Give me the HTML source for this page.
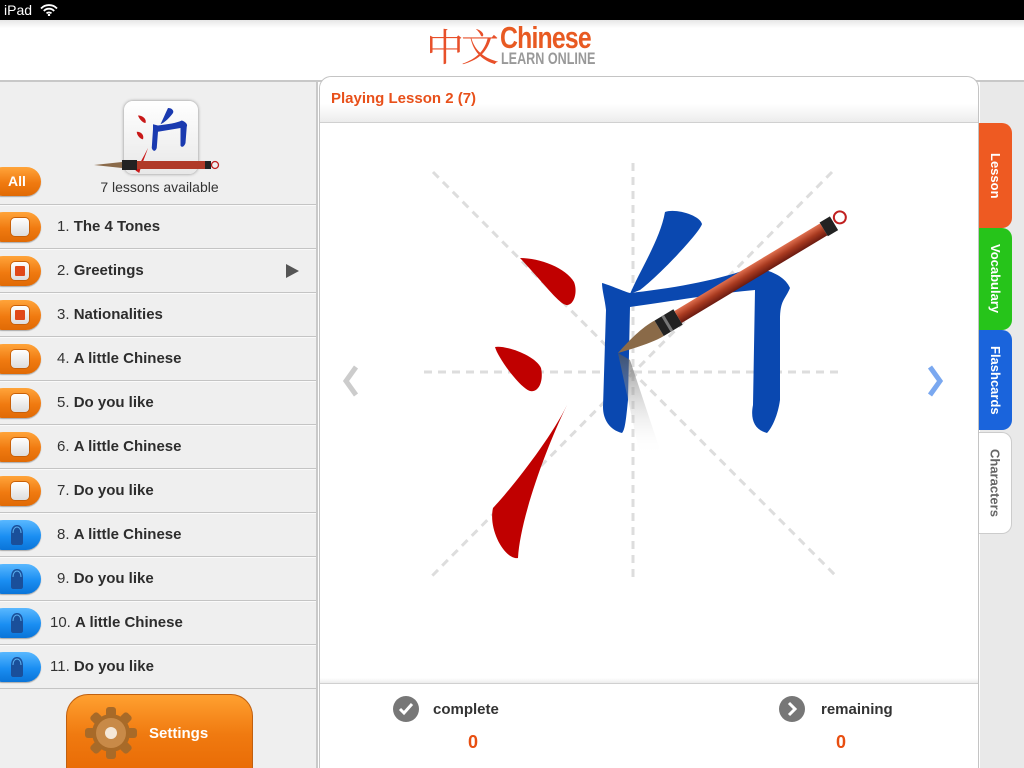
<!DOCTYPE html>
<html><head><meta charset="utf-8"><style>
*{margin:0;padding:0;box-sizing:border-box}
html,body{width:1024px;height:768px;overflow:hidden}
body{position:relative;background:#fff;font-family:"Liberation Sans","DejaVu Sans",sans-serif}
.abs{position:absolute}
#status{left:0;top:0;width:1024px;height:20px;background:#000;color:#fff;font-size:14px;line-height:20px;padding-left:4px}
#header{left:0;top:20px;width:1024px;height:62px;background:linear-gradient(#e6e6e6 0,#fff 8px,#fff 100%);border-bottom:2px solid #c8c8c8}
#left{left:0;top:82px;width:318px;height:686px;background:#efefef;border-right:2px solid #c9c9c9}
.row{position:absolute;left:0;width:316px;height:44px;border-top:1px solid #c4c4c4;box-shadow:inset 0 1px 0 #fafafa}
.pill{position:absolute;left:-12px;top:7px;width:53px;height:30px;border-radius:15px;background:linear-gradient(#ffa43a,#f07a10 55%,#e06a05);box-shadow:0 1px 1px rgba(0,0,0,.3)}
.pill.blue{background:linear-gradient(#5ab8ff,#1a8ef2 55%,#0a74d8)}
.cb{position:absolute;left:23px;top:6px;width:18px;height:18px;border-radius:4px;background:linear-gradient(#fff,#ddd);box-shadow:0 0 0 1px #c86008}
.cb.on::after{content:"";position:absolute;left:4px;top:4px;width:10px;height:10px;background:#e04818;border-radius:1px}
.lock{position:absolute;left:22px;top:5px;width:14px;height:20px}
.lbl{position:absolute;top:13px;font-size:15px;color:#333;white-space:nowrap}
.lbl b{color:#2d2d2d}
#main{left:319px;top:76px;width:660px;height:692px;background:#fff;border:1px solid #c4c4c4;border-bottom:none;border-radius:12px 12px 0 0}
#mh{left:320px;top:77px;width:658px;height:46px;background:linear-gradient(#fff 60%,#ececec);border-bottom:1px solid #d0d0d0;border-radius:12px 12px 0 0;color:#e8501a;font-weight:bold;font-size:15px;padding:13px 0 0 11px}
#mf{left:320px;top:678px;width:658px;height:6px;background:linear-gradient(#fff,#ececec);border-bottom:1px solid #d0d0d0}
#tabsbg{left:980px;top:82px;width:44px;height:686px;background:#e9e9e9}
.tab{position:absolute;left:979px;width:33px;border-radius:0 10px 10px 0;color:#fff;font-weight:bold;font-size:13px;writing-mode:vertical-rl;text-align:center;display:flex;align-items:center;justify-content:center;line-height:33px}
</style></head><body>
<div id="status" class="abs">iPad <svg width="18" height="12" viewBox="0 0 18 12" style="vertical-align:-1px;margin-left:4px"><path d="M1 4.5A11 11 0 0 1 17 4.5M3.8 7A7 7 0 0 1 14.2 7M6.5 9.4A3.5 3.5 0 0 1 11.5 9.4" stroke="#fff" stroke-width="1.8" fill="none"/><circle cx="9" cy="11" r="1.2" fill="#fff"/></svg></div>
<div id="header" class="abs">
 <div class="abs" style="left:426px;top:2px;font-family:'Noto Serif CJK SC',serif;font-size:38px;color:#e8502a;line-height:46px;letter-spacing:-3px">中文</div>
 <div class="abs" style="left:500px;top:3px;font-size:31px;font-weight:bold;color:#e85a22;line-height:30px;transform:scaleX(.8);transform-origin:left;letter-spacing:-1px">Chinese</div>
 <div class="abs" style="left:501px;top:31px;font-size:17px;font-weight:bold;color:#999;line-height:16px;transform:scaleX(.74);transform-origin:left">LEARN ONLINE</div>
</div>
<div id="left" class="abs">
 <div class="abs" style="left:124px;top:19px;width:74px;height:73px;border-radius:9px;background:linear-gradient(#fff,#e8e8e8);box-shadow:0 0 3px #888"></div>
 <svg class="abs" style="left:124px;top:19px" width="74" height="73" viewBox="0 0 74 73">
  <g transform="translate(-6,-3) scale(1.25)">
  <g fill="#c81818"><path d="M16 14C20 14 23 17 22 20C20 20 17 17 16 14Z"/><path d="M15 27C19 27 21 30 20 33C18 33 15 30 15 27Z"/><path d="M24 40C20 48 16 55 14 58L17 60C19 53 22 46 24 40Z"/></g>
  <g fill="#1a3ab0"><path d="M40 8C43 8 45 10 44 12C42 15 37 20 34 21C36 17 38 12 40 8Z"/><path d="M28 21L32 22C40 21 47 20 51 18C54 19 56 21 55 23L54 36C53 39 51 40 50 38L50 24C44 25 38 26 32 27L31 40C30 43 28 43 27 40L28 25Z"/></g>
  </g>
 </svg>
 <svg class="abs" style="left:94px;top:76px" width="128" height="14"><path d="M0 7 L28 4 L28 10Z" fill="#8a6a4a"/><rect x="28" y="2" width="15" height="10" fill="#222"/><rect x="43" y="3" width="68" height="8" fill="#b03a28"/><rect x="111" y="3" width="6" height="8" fill="#222"/><circle cx="121" cy="7" r="3.5" fill="none" stroke="#c02020" stroke-width="1.3"/></svg>
 <div class="abs" style="left:0;top:97px;width:318px;text-align:center;font-size:14px;color:#333;padding-left:1px">7 lessons available</div>
 <div class="pill" style="top:85px;height:29px"><span style="position:absolute;left:20px;top:6px;color:#fff;font-weight:bold;font-size:14px">All</span></div>
</div>
<div class="row" style="top:204px"><div class="pill"><div class="cb"></div></div><div class="lbl" style="left:57px">1. <b>The 4 Tones</b></div></div>
<div class="row" style="top:248px"><div class="pill"><div class="cb on"></div></div><div class="lbl" style="left:57px">2. <b>Greetings</b></div><svg class="abs" style="left:286px;top:15px" width="14" height="14"><path d="M0 0L13 7L0 14Z" fill="#555"/></svg></div>
<div class="row" style="top:292px"><div class="pill"><div class="cb on"></div></div><div class="lbl" style="left:57px">3. <b>Nationalities</b></div></div>
<div class="row" style="top:336px"><div class="pill"><div class="cb"></div></div><div class="lbl" style="left:57px">4. <b>A little Chinese</b></div></div>
<div class="row" style="top:380px"><div class="pill"><div class="cb"></div></div><div class="lbl" style="left:57px">5. <b>Do you like</b></div></div>
<div class="row" style="top:424px"><div class="pill"><div class="cb"></div></div><div class="lbl" style="left:57px">6. <b>A little Chinese</b></div></div>
<div class="row" style="top:468px"><div class="pill"><div class="cb"></div></div><div class="lbl" style="left:57px">7. <b>Do you like</b></div></div>
<div class="row" style="top:512px"><div class="pill blue"><svg class="lock" viewBox="0 0 14 20"><path d="M1 9C1 2 4 0 7 0S13 2 13 9V18C13 19 12 20 11 20H3C2 20 1 19 1 18Z" fill="#1a4f9a"/><path d="M3 8C3 4 5 2 7 2S11 4 11 8" stroke="#5ab0f0" stroke-width="1" fill="none"/></svg></div><div class="lbl" style="left:57px">8. <b>A little Chinese</b></div></div>
<div class="row" style="top:556px"><div class="pill blue"><svg class="lock" viewBox="0 0 14 20"><path d="M1 9C1 2 4 0 7 0S13 2 13 9V18C13 19 12 20 11 20H3C2 20 1 19 1 18Z" fill="#1a4f9a"/><path d="M3 8C3 4 5 2 7 2S11 4 11 8" stroke="#5ab0f0" stroke-width="1" fill="none"/></svg></div><div class="lbl" style="left:57px">9. <b>Do you like</b></div></div>
<div class="row" style="top:600px"><div class="pill blue"><svg class="lock" viewBox="0 0 14 20"><path d="M1 9C1 2 4 0 7 0S13 2 13 9V18C13 19 12 20 11 20H3C2 20 1 19 1 18Z" fill="#1a4f9a"/><path d="M3 8C3 4 5 2 7 2S11 4 11 8" stroke="#5ab0f0" stroke-width="1" fill="none"/></svg></div><div class="lbl" style="left:50px">10. <b>A little Chinese</b></div></div>
<div class="row" style="top:644px"><div class="pill blue"><svg class="lock" viewBox="0 0 14 20"><path d="M1 9C1 2 4 0 7 0S13 2 13 9V18C13 19 12 20 11 20H3C2 20 1 19 1 18Z" fill="#1a4f9a"/><path d="M3 8C3 4 5 2 7 2S11 4 11 8" stroke="#5ab0f0" stroke-width="1" fill="none"/></svg></div><div class="lbl" style="left:50px">11. <b>Do you like</b></div></div>
<div class="row" style="top:688px;height:1px"></div>
<div class="abs" style="left:66px;top:694px;width:187px;height:80px;border-radius:22px 22px 0 0;background:linear-gradient(#ffa030,#f07a10 50%,#e86a05);border:1px solid #c06010;border-bottom:none"></div>
<svg class="abs" style="left:84px;top:706px" width="54" height="54" viewBox="-27 -27 54 54"><g fill="#a86a28"><circle r="19"/><g id="t"><rect x="-5" y="-26" width="10" height="10" rx="3"/></g><use href="#t" transform="rotate(45)"/><use href="#t" transform="rotate(90)"/><use href="#t" transform="rotate(135)"/><use href="#t" transform="rotate(180)"/><use href="#t" transform="rotate(225)"/><use href="#t" transform="rotate(270)"/><use href="#t" transform="rotate(315)"/></g><circle r="15" fill="#c88a48"/><circle r="6" fill="#f5e8d8"/></svg>
<div class="abs" style="left:149px;top:725px;color:#fff;font-weight:bold;font-size:15px">Settings</div>

<div id="tabsbg" class="abs"></div>
<div id="main" class="abs"></div>
<div id="mh" class="abs">Playing Lesson 2 (7)</div>
<div id="mf" class="abs"></div>
<div class="tab" style="top:123px;height:105px;background:#ee5a22">Lesson</div>
<div class="tab" style="top:228px;height:102px;background:#26c41a">Vocabulary</div>
<div class="tab" style="top:330px;height:100px;background:#1a64dc">Flashcards</div>
<div class="tab" style="top:432px;height:102px;background:#fff;color:#666;border:1px solid #ccc;border-left:none">Characters</div>

<svg class="abs" style="left:320px;top:124px" width="658" height="554" viewBox="320 124 658 554">
 <g stroke="#ddd" stroke-width="3" stroke-dasharray="8 6" fill="none">
  <path d="M633 163V580M424 372H842M433 172L838 578M832 172L430 578"/>
 </g>
 <path d="M356 367l-10 14 10 14" stroke="#ccc" stroke-width="5" fill="none"/>
 <path d="M930 367l10 14-10 14" stroke="#7aa8f0" stroke-width="5" fill="none"/>
 <g fill="#c00000">
  <path d="M520 258C540 258 566 268 574 282C578 292 574 305 567 305C560 305 548 288 520 258Z"/>
  <path d="M495 347C505 345 535 355 541 368C544 382 538 393 530 391C520 388 498 358 495 347Z"/>
  <path d="M567 405C550 440 510 490 493 508C488 530 505 560 518 558C520 520 545 450 567 405Z"/>
 </g>
 <g fill="#0a48b0">
  <path d="M665 212C675 208 700 215 702 224C700 232 660 275 640 290L630 294C640 270 660 240 665 212Z"/>
  <path d="M602 283C610 285 625 292 630 293C675 288 720 280 753 267C770 270 785 276 790 288C785 300 780 300 780 320L780 400C778 415 772 428 767 433C755 430 750 420 753 405L755 290C720 293 680 300 630 307L628 400C626 420 625 430 622 433C610 430 603 420 603 407L606 310C605 300 602 290 602 283Z"/>
 </g>
 <defs><linearGradient id="sh" x1="0" y1="0" x2="0" y2="1"><stop offset="0" stop-color="#555"/><stop offset="1" stop-color="#fff" stop-opacity="0"/></linearGradient>
 <linearGradient id="br" x1="0" y1="0" x2="0" y2="1"><stop offset="0" stop-color="#e07050"/><stop offset=".5" stop-color="#a83a20"/><stop offset="1" stop-color="#6a1a10"/></linearGradient></defs>
 <path d="M618 353L630 360L660 450L640 455Z" fill="url(#sh)" opacity=".7"/>
 <g transform="translate(618,353) rotate(-31)">
  <path d="M0 0C15 -5 35 -10 48 -9L48 9C35 9 15 4 0 0Z" fill="#8a6a48"/>
  <rect x="48" y="-9" width="22" height="18" fill="#222"/>
  <rect x="56" y="-9" width="3" height="18" fill="#777"/>
  <rect x="70" y="-7" width="170" height="14" fill="url(#br)"/>
  <rect x="240" y="-8" width="12" height="16" fill="#222"/>
  <circle cx="260" cy="-2" r="6" fill="none" stroke="#c02020" stroke-width="2"/>
 </g>
</svg>

<svg class="abs" style="left:392px;top:695px" width="30" height="30"><circle cx="14" cy="14" r="13" fill="#777"/><path d="M8 14l4 4 8-9" stroke="#fff" stroke-width="3" fill="none"/></svg>
<div class="abs" style="left:433px;top:701px;font-size:15px;font-weight:bold;color:#333">complete</div>
<div class="abs" style="left:468px;top:732px;font-size:18px;font-weight:bold;color:#e84e10">0</div>
<svg class="abs" style="left:778px;top:695px" width="30" height="30"><circle cx="14" cy="14" r="13" fill="#777"/><path d="M11 8l6 6-6 6" stroke="#fff" stroke-width="3" fill="none"/></svg>
<div class="abs" style="left:821px;top:701px;font-size:15px;font-weight:bold;color:#333">remaining</div>
<div class="abs" style="left:836px;top:732px;font-size:18px;font-weight:bold;color:#e84e10">0</div>
</body></html>
